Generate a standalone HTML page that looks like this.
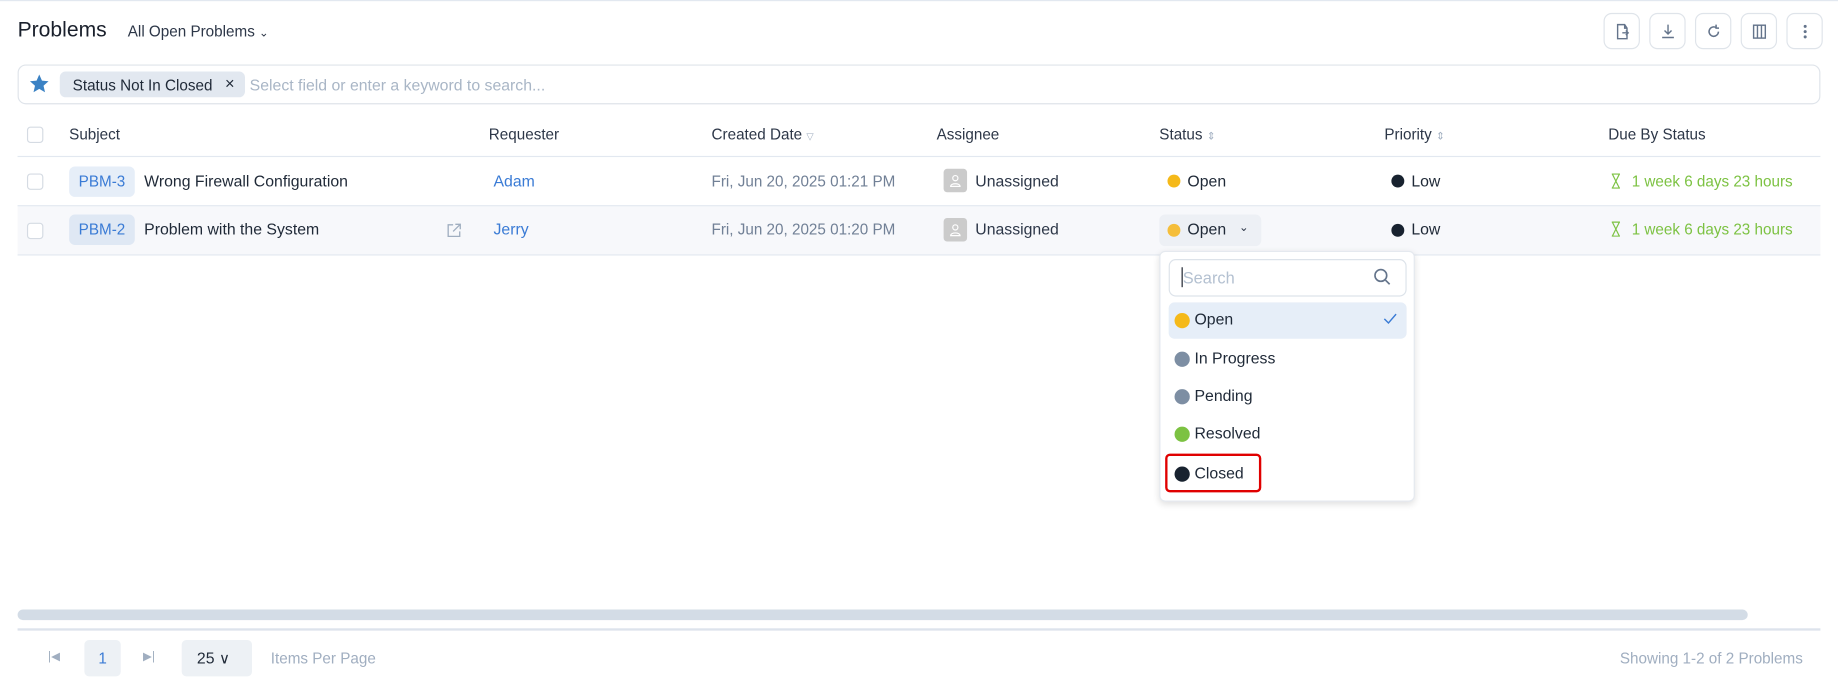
<!DOCTYPE html>
<html><head><meta charset="utf-8"><style>
*{box-sizing:border-box;margin:0;padding:0}
html,body{width:1838px;height:690px;overflow:hidden;background:#fff}
#w{width:1568px;height:589px;transform:scale(1.17219);transform-origin:0 0;position:relative;font-family:"Liberation Sans",sans-serif;color:#1f2937;font-size:13px}
.a{position:absolute;white-space:nowrap}
.btn{position:absolute;top:11px;width:31px;height:31px;border:1px solid #dfe4ea;border-radius:7px;display:flex;align-items:center;justify-content:center}
.hd{position:absolute;top:107px;font-size:13px;color:#2d3748}
.cb{position:absolute;left:23px;width:14px;height:14px;border:1px solid #d5dbe3;border-radius:3px;background:#fff}
.dot{position:absolute;width:11px;height:11px;border-radius:50%}
.line{position:absolute;left:15px;width:1538px;height:1px;background:#e2e8f0}
.mi{position:absolute;left:1019px;font-size:13.5px;color:#1f2937}
</style></head><body><div id="w">
<div class="a" style="left:0;top:0;width:1568px;height:1px;background:#e2e8f0"></div>
<div class="a" style="left:15px;top:15px;font-size:18px;color:#1a202c">Problems</div>
<div class="a" style="left:109px;top:19px;font-size:13px;color:#2d3748">All Open Problems <span style="font-size:10px">&#8964;</span></div>

<div class="btn" style="left:1368px"><svg width="16" height="16" viewBox="0 0 16 16" fill="none" stroke="#64748b" stroke-width="1.2"><path d="M10 2H4v12h8V5z M10 2v3h2 M8 9h5 M11 7l2 2-2 2"/></svg></div>
<div class="btn" style="left:1407px"><svg width="16" height="16" viewBox="0 0 16 16" fill="none" stroke="#64748b" stroke-width="1.2"><path d="M8 2v8 M5 7l3 3 3-3 M3 13h10"/></svg></div>
<div class="btn" style="left:1446px"><svg width="16" height="16" viewBox="0 0 16 16" fill="none" stroke="#64748b" stroke-width="1.3"><path d="M12 8a4 4 0 1 1-2-3.5 M10 2v3h2.5"/></svg></div>
<div class="btn" style="left:1485px"><svg width="16" height="16" viewBox="0 0 16 16" fill="none" stroke="#64748b" stroke-width="1.2"><rect x="3" y="2.5" width="10" height="11"/><path d="M6.3 2.5v11 M9.7 2.5v11"/></svg></div>
<div class="btn" style="left:1524px"><svg width="16" height="16" viewBox="0 0 16 16" fill="#64748b"><circle cx="8" cy="3.5" r="1.3"/><circle cx="8" cy="8" r="1.3"/><circle cx="8" cy="12.5" r="1.3"/></svg></div>

<div class="a" style="left:15px;top:55px;width:1538px;height:34px;border:1px solid #dfe4ea;border-radius:7px"></div>
<svg class="a" style="left:24px;top:62px" width="19" height="19" viewBox="0 0 24 24"><path fill="#3b82c4" d="M12 2l2.9 6.6 7.1.7-5.4 4.8 1.6 7L12 17.4 5.8 21.1l1.6-7L2 9.3l7.1-.7z"/></svg>
<div class="a" style="left:51px;top:61px;width:158px;height:22px;background:#e2e8f0;border-radius:5px"></div>
<div class="a" style="left:62px;top:65px;font-size:13px;color:#1f2937">Status Not In Closed</div>
<div class="a" style="left:192px;top:63px;font-size:14px;color:#1f2937">&#215;</div>
<div class="a" style="left:213px;top:65px;font-size:13.5px;color:#a9b6c6">Select field or enter a keyword to search...</div>

<div class="cb" style="top:108px"></div>
<div class="hd" style="left:59px">Subject</div>
<div class="hd" style="left:417px">Requester</div>
<div class="hd" style="left:607px">Created Date <span style="font-size:8px;color:#a0aec0">&#9661;</span></div>
<div class="hd" style="left:799px">Assignee</div>
<div class="hd" style="left:989px">Status <span style="font-size:9px;color:#a0aec0">&#8661;</span></div>
<div class="hd" style="left:1181px">Priority <span style="font-size:9px;color:#a0aec0">&#8661;</span></div>
<div class="hd" style="left:1372px">Due By Status</div>
<div class="line" style="top:133px"></div>

<div class="a" style="left:15px;top:176px;width:1538px;height:41px;background:#f7f8fb"></div>
<div class="line" style="top:175px"></div>
<div class="line" style="top:217px"></div>

<div class="cb" style="top:148px"></div>
<div class="cb" style="top:190px"></div>
<div class="a" style="left:59px;top:142px;width:56px;height:26px;background:#e6eef8;border-radius:5px;color:#3a7bd5;font-size:13px;text-align:center;line-height:26px">PBM-3</div>
<div class="a" style="left:59px;top:183px;width:56px;height:26px;background:#dfe8f4;border-radius:5px;color:#3a7bd5;font-size:13px;text-align:center;line-height:26px">PBM-2</div>
<div class="a" style="left:123px;top:147px;font-size:13.5px">Wrong Firewall Configuration</div>
<div class="a" style="left:123px;top:188px;font-size:13.5px">Problem with the System</div>
<svg class="a" style="left:380px;top:189px" width="15" height="15" viewBox="0 0 16 16" fill="none" stroke="#a0aec0" stroke-width="1.2"><path d="M7 3H2.5v10.5H13V9 M9 2.5h4.5V7 M13.5 2.5L7 9"/></svg>
<div class="a" style="left:421px;top:147px;font-size:13.5px;color:#3a7bd5">Adam</div>
<div class="a" style="left:421px;top:188px;font-size:13.5px;color:#3a7bd5">Jerry</div>
<div class="a" style="left:607px;top:147px;font-size:13px;color:#718096">Fri, Jun 20, 2025 01:21 PM</div>
<div class="a" style="left:607px;top:188px;font-size:13px;color:#718096">Fri, Jun 20, 2025 01:20 PM</div>

<div class="a" style="left:805px;top:144px;width:20px;height:20px;background:#cbcbcb;border-radius:3px"></div>
<div class="a" style="left:805px;top:186px;width:20px;height:20px;background:#cbcbcb;border-radius:3px"></div>
<svg class="a" style="left:809px;top:148px" width="12" height="12" viewBox="0 0 12 12" fill="none" stroke="#fff" stroke-width="1"><circle cx="6" cy="4" r="2.2"/><path d="M2 11c0-3 8-3 8 0z"/></svg>
<svg class="a" style="left:809px;top:190px" width="12" height="12" viewBox="0 0 12 12" fill="none" stroke="#fff" stroke-width="1"><circle cx="6" cy="4" r="2.2"/><path d="M2 11c0-3 8-3 8 0z"/></svg>
<div class="a" style="left:832px;top:147px;font-size:13.5px;color:#2d3748">Unassigned</div>
<div class="a" style="left:832px;top:188px;font-size:13.5px;color:#2d3748">Unassigned</div>

<div class="dot" style="left:996px;top:149px;background:#f5b919"></div>
<div class="a" style="left:1013px;top:147px;font-size:13.5px">Open</div>
<div class="a" style="left:989px;top:183px;width:87px;height:27px;background:#edf0f5;border-radius:5px"></div>
<div class="dot" style="left:996px;top:191px;background:#f5be3a"></div>
<div class="a" style="left:1013px;top:188px;font-size:13.5px">Open</div>
<div class="a" style="left:1057px;top:189px;font-size:10px;color:#2d3748">&#8964;</div>

<div class="dot" style="left:1187px;top:149px;background:#18222f"></div>
<div class="a" style="left:1204px;top:147px;font-size:13.5px">Low</div>
<div class="dot" style="left:1187px;top:191px;background:#18222f"></div>
<div class="a" style="left:1204px;top:188px;font-size:13.5px">Low</div>

<svg class="a" style="left:1374px;top:148px" width="9" height="13" viewBox="0 0 9 13" fill="none" stroke="#7cc242" stroke-width="1"><path d="M1 .5h7 M1 12.5h7 M1.5 .5L4.5 6.5 1.5 12.5 M7.5 .5L4.5 6.5 7.5 12.5"/></svg>
<div class="a" style="left:1392px;top:147px;font-size:13px;color:#7cc242">1 week 6 days 23 hours</div>
<svg class="a" style="left:1374px;top:189px" width="9" height="13" viewBox="0 0 9 13" fill="none" stroke="#7cc242" stroke-width="1"><path d="M1 .5h7 M1 12.5h7 M1.5 .5L4.5 6.5 1.5 12.5 M7.5 .5L4.5 6.5 7.5 12.5"/></svg>
<div class="a" style="left:1392px;top:188px;font-size:13px;color:#7cc242">1 week 6 days 23 hours</div>

<div class="a" style="left:989px;top:214px;width:218px;height:214px;background:#fff;border:1px solid #e5e9ef;border-radius:5px;box-shadow:0 2px 6px rgba(0,0,0,.12)"></div>
<div class="a" style="left:997px;top:221px;width:203px;height:32px;border:1px solid #dde3ea;border-radius:6px"></div>
<div class="a" style="left:1008px;top:228px;width:1px;height:17px;background:#1a202c"></div>
<div class="a" style="left:1009px;top:229px;font-size:14px;color:#b4c1d1">Search</div>
<svg class="a" style="left:1171px;top:228px" width="16" height="16" viewBox="0 0 16 16" fill="none" stroke="#64748b" stroke-width="1.4"><circle cx="7" cy="7" r="5"/><path d="M11 11l3.5 3.5"/></svg>
<div class="a" style="left:997px;top:258px;width:203px;height:31px;background:#e6eef8;border-radius:5px"></div>
<div class="dot" style="left:1002px;top:267px;width:13px;height:13px;background:#f5b919"></div>
<div class="mi" style="top:265px">Open</div>
<svg class="a" style="left:1180px;top:267px" width="12" height="10" viewBox="0 0 12 10" fill="none" stroke="#3a7bd5" stroke-width="1.2"><path d="M1 5l3.5 3.5L11 1"/></svg>
<div class="dot" style="left:1002px;top:300px;width:13px;height:13px;background:#7d8ea3"></div>
<div class="mi" style="top:298px">In Progress</div>
<div class="dot" style="left:1002px;top:332px;width:13px;height:13px;background:#7d8ea3"></div>
<div class="mi" style="top:330px">Pending</div>
<div class="dot" style="left:1002px;top:364px;width:13px;height:13px;background:#7cc242"></div>
<div class="mi" style="top:362px">Resolved</div>
<div class="a" style="left:994px;top:387px;width:82px;height:33px;border:2px solid #e00000;border-radius:4px"></div>
<div class="dot" style="left:1002px;top:398px;width:13px;height:13px;background:#18222f"></div>
<div class="mi" style="top:396px">Closed</div>

<div class="a" style="left:15px;top:520px;width:1476px;height:9px;background:#d3dce6;border-radius:5px"></div>
<div class="a" style="left:15px;top:536px;width:1538px;height:2px;background:#dde3ec"></div>
<div class="a" style="left:41px;top:555px;font-size:10px;color:#a0aec0">|&#9664;</div>
<div class="a" style="left:72px;top:546px;width:31px;height:31px;background:#edf1f5;border-radius:4px;text-align:center;line-height:31px;font-size:13px;color:#3a7bd5">1</div>
<div class="a" style="left:122px;top:555px;font-size:10px;color:#a0aec0">&#9654;|</div>
<div class="a" style="left:155px;top:546px;width:60px;height:31px;background:#edf1f5;border-radius:4px;line-height:31px;font-size:13.5px;padding-left:13px;color:#1f2937">25 <span style="font-size:13px">&#8744;</span></div>
<div class="a" style="left:231px;top:554px;font-size:13px;color:#a0aec0">Items Per Page</div>
<div class="a" style="right:30px;top:554px;font-size:13px;color:#a0aec0">Showing 1-2 of 2 Problems</div>
</div></body></html>
